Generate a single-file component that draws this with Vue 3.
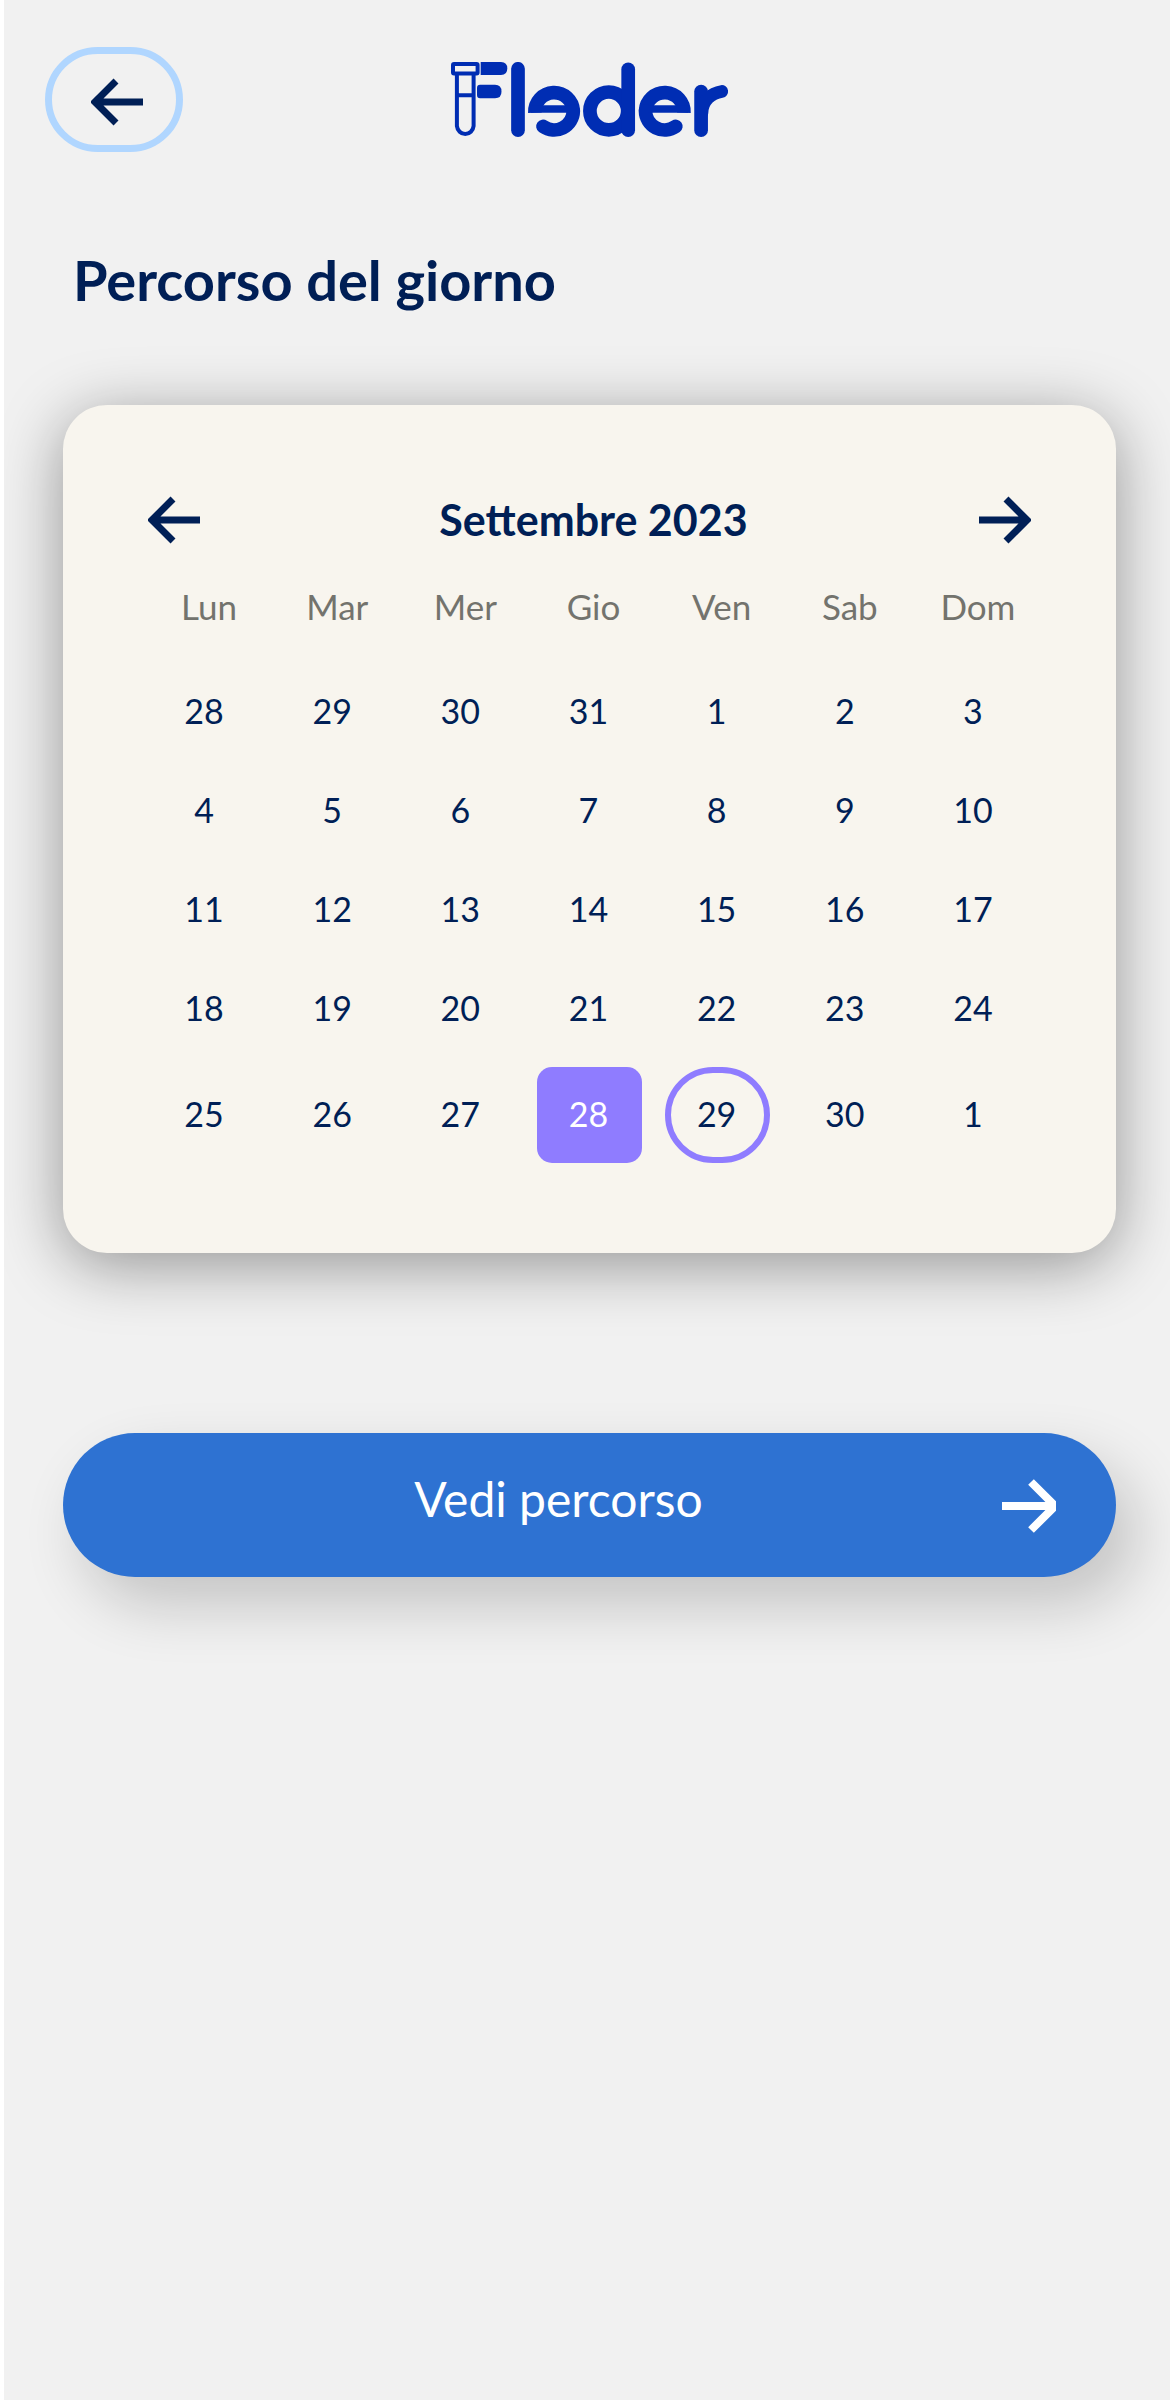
<script setup>
import { ref } from 'vue'

const weekdays = ['Lun', 'Mar', 'Mer', 'Gio', 'Ven', 'Sab', 'Dom']

const weeks = [
  [28, 29, 30, 31, 1, 2, 3],
  [4, 5, 6, 7, 8, 9, 10],
  [11, 12, 13, 14, 15, 16, 17],
  [18, 19, 20, 21, 22, 23, 24],
  [25, 26, 27, 28, 29, 30, 1],
]

const selected = ref('4-3')
const today = '4-4'
</script>

<template>
  <main class="page">
    <header class="topbar">
      <button class="back" type="button" aria-label="Indietro">
        <svg width="52" height="48" viewBox="0 0 52 48" aria-hidden="true">
          <path d="M25 3 L4 24 L25 45 M5 24 H52" />
        </svg>
      </button>

      <svg class="logo" width="278" height="76" viewBox="0 0 278 76" role="img" aria-label="Fleder">
        <!-- test tube -->
        <rect x="2" y="2" width="24.6" height="9.6" rx="1" stroke-width="4" />
        <path d="M5.9 12 V64 A8.4 9 0 0 0 22.6 64 V12 M6 33.2 H22.5" stroke-width="4" />
        <path class="solid" d="M29.7 0 H50 Q56.3 0 56.3 6.5 Q56.3 13 50 13 H29.7 Z" />
        <path class="solid" d="M29 22.7 H44 Q50.5 22.7 50.5 29.5 Q50.5 36.3 44 36.3 H29 Q26 36.3 26 33 V26 Q26 22.7 29 22.7 Z" />
        <!-- wordmark strokes -->
        <g stroke-width="13.7">
          <path class="round" d="M67 6.8 V68.2" />
          <path d="M83.9 50.7 A19.2 19.2 0 0 1 122.3 48.9" />
          <path class="round" d="M122.3 48.9 A19.2 19.2 0 0 1 92 64.4" />
          <path d="M80 47 H120" stroke-width="7.6" />
          <circle cx="157.8" cy="48.9" r="18.9" />
          <path class="round" d="M177.2 7.4 V68.2" />
          <path d="M232.9 50.7 A19.2 19.2 0 0 0 194.5 48.9" />
          <path class="round" d="M194.5 48.9 A19.2 19.2 0 0 0 224.8 64.4" />
          <path d="M197 47 H237" stroke-width="7.6" />
          <path class="round" d="M250.1 29.6 V68.2" />
          <path class="round" d="M251 51 C251 39 260 31 270.8 29.4" stroke-width="12.6" />
        </g>
      </svg>
    </header>

    <h1 class="title">Percorso del giorno</h1>

    <section class="card">
      <div class="month">
        <button class="nav" type="button" aria-label="Mese precedente">
          <svg width="52" height="48" viewBox="0 0 52 48" aria-hidden="true">
            <path d="M25 3 L4 24 L25 45 M5 24 H52" />
          </svg>
        </button>
        <h2 class="month-name">Settembre 2023</h2>
        <button class="nav" type="button" aria-label="Mese successivo">
          <svg width="52" height="48" viewBox="0 0 52 48" aria-hidden="true">
            <path d="M27 3 L48 24 L27 45 M47 24 H0" />
          </svg>
        </button>
      </div>

      <table class="calendar">
        <thead>
          <tr>
            <th v-for="name in weekdays" :key="name" scope="col">{{ name }}</th>
          </tr>
        </thead>
        <tbody>
          <tr v-for="(week, w) in weeks" :key="w">
            <td v-for="(day, d) in week" :key="d">
              <button
                type="button"
                class="day"
                :class="{ selected: selected === `${w}-${d}`, today: today === `${w}-${d}` }"
                @click="selected = `${w}-${d}`"
              >{{ day }}</button>
            </td>
          </tr>
        </tbody>
      </table>
    </section>

    <button class="cta" type="button">
      <span class="cta-label">Vedi percorso</span>
      <svg width="54" height="54" viewBox="0 0 54 54" aria-hidden="true">
        <path d="M29 3 L53 27 L29 51 M50 27 H0" />
      </svg>
    </button>
  </main>
</template>

<style>
body {
  margin: 0;
  background: #f1f1f1;
}
</style>

<style scoped>
.page {
  box-sizing: border-box;
  min-height: 100vh;
  padding: 47px 54px 60px 59px;
  border-left: 4px solid #fff;
  background: #f1f1f1;
  color: #001f56;
  font-family: Lato, "Liberation Sans", sans-serif;
  overflow: hidden;
}

button {
  margin: 0;
  padding: 0;
  border: 0;
  background: none;
  color: inherit;
  font: inherit;
  cursor: pointer;
}

button svg {
  display: block;
  flex: none;
  fill: none;
  stroke: currentColor;
  stroke-width: 7;
}

.topbar {
  display: grid;
  grid-template-columns: 1fr auto 1fr;
  align-items: start;
  margin: 0 -18px;
}

.back {
  display: flex;
  align-items: center;
  justify-content: center;
  box-sizing: border-box;
  width: 138px;
  height: 105px;
  padding: 4px 0 0 6px;
  border: 7px solid #b0d6ff;
  border-radius: 53px;
}

.logo {
  display: block;
  margin-top: 15px;
  fill: none;
  stroke: #002db3;
}

.logo .solid {
  fill: #002db3;
  stroke: none;
}

.logo .round {
  stroke-linecap: round;
}

.title {
  margin: 98px 0 95px;
  padding-left: 10px;
  font-size: 56px;
  line-height: 60px;
  font-weight: 700;
}

.card {
  padding: 91px 78px 82px;
  border-radius: 44px;
  background: #f8f5ee;
  box-shadow: 0 12px 64px rgba(0, 0, 0, 0.39);
}

.month {
  display: flex;
  align-items: center;
  justify-content: space-between;
  margin: 0 7px;
}

.month-name {
  margin: 0;
  padding-left: 8px;
  font-size: 43px;
  line-height: 48px;
  font-weight: 700;
}

.calendar {
  width: 100%;
  table-layout: fixed;
  border-collapse: collapse;
  font-size: 34px;
  line-height: 40px;
}

.calendar th {
  box-sizing: border-box;
  height: 119px;
  padding: 42px 0 0 8px;
  color: #73736d;
  font-size: 35px;
  font-weight: 400;
  text-align: center;
  vertical-align: top;
}

.calendar td {
  height: 99px;
  padding: 0;
  text-align: center;
  vertical-align: middle;
}

.calendar tr:last-child td {
  height: 112px;
}

.day {
  display: block;
  box-sizing: border-box;
  width: 105px;
  height: 96px;
  margin: 0 auto;
  padding: 0 2px 3px 0;
  border-radius: 15px;
}

.day.today {
  border: 6px solid #8f7cff;
  border-radius: 48px;
}

.day.selected {
  background: #8f7cff;
  color: #fff;
}

.cta {
  display: flex;
  align-items: center;
  box-sizing: border-box;
  width: 100%;
  height: 144px;
  margin-top: 180px;
  padding: 2px 60px 0 52px;
  border-radius: 72px;
  background: #2e72d2;
  box-shadow: 20px 28px 60px rgba(0, 0, 0, 0.19);
  color: #fff;
}

.cta-label {
  flex: 1;
  padding-bottom: 14px;
  font-size: 48px;
  line-height: 56px;
  text-align: center;
}

.cta svg {
  stroke-width: 8;
}
</style>
